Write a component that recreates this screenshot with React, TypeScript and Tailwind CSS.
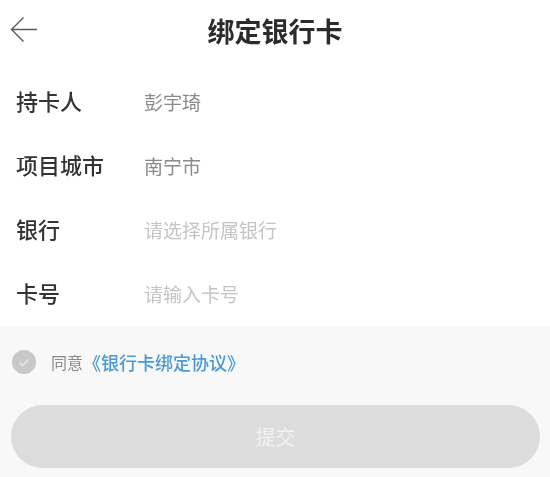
const rows = [
  { label: '持卡人', value: '彭宇琦', filled: true },
  { label: '项目城市', value: '南宁市', filled: true },
  { label: '银行', value: '请选择所属银行', filled: false },
  { label: '卡号', value: '请输入卡号', filled: false },
];

const font = { fontFamily: '"Noto Sans CJK SC", sans-serif' };

export default function App() {
  return (
    <div className="w-[550px] h-[477px] overflow-hidden bg-white flex flex-col blur-[0.5px]" style={font}>
      {/* Header */}
      <header className="relative h-[68px] pb-[7px] flex items-center justify-center shrink-0">
        <button className="absolute left-[10px] top-[16px] text-[#5a5a5a]" aria-label="back">
          <svg className="block" width="28" height="28" viewBox="0 0 28 28" fill="none" stroke="currentColor" strokeWidth="1.4">
            <path d="M13.5 1.5L1.5 13.5l12 12M1.5 13.5H27" />
          </svg>
        </button>
        <h1 className="text-[27px] font-semibold leading-none text-[#2b2b2b]">绑定银行卡</h1>
      </header>

      {/* Form rows */}
      <div className="h-[258px] shrink-0 flex flex-col">
        {rows.map((row) => (
          <div key={row.label} className="h-[64px] flex items-center pl-[16px]">
            <span className="w-[128px] text-[22px] leading-none font-medium text-[#333333]">{row.label}</span>
            <span className={`text-[19px] leading-none mt-[3px] ${row.filled ? 'text-[#8a8a8a]' : 'text-[#c4c4c4]'}`}>
              {row.value}
            </span>
          </div>
        ))}
      </div>

      {/* Footer */}
      <div className="flex-1 bg-[#f8f8f8] px-[11px]">
        <div className="h-[72px] flex items-center pl-[1px]">
          <span className="w-[24px] h-[24px] rounded-full bg-[#c8c8c8] flex items-center justify-center shrink-0">
            <svg width="14" height="14" viewBox="0 0 14 14" fill="none" stroke="#e6e6e6" strokeWidth="1.6">
              <path d="M2.5 7.5l3 3 6-6" />
            </svg>
          </span>
          <span className="ml-[15px] text-[16px] leading-none text-[#8a8a8a]">同意</span>
          <span className="text-[18px] leading-none font-medium text-[#4a9ad8]">《银行卡绑定协议》</span>
        </div>
        <button className="mt-[7px] w-[529px] h-[63px] rounded-full bg-[#dcdcdc] text-[20px] text-[#f2f2f2] flex items-center justify-center">
          提交
        </button>
      </div>
    </div>
  );
}
